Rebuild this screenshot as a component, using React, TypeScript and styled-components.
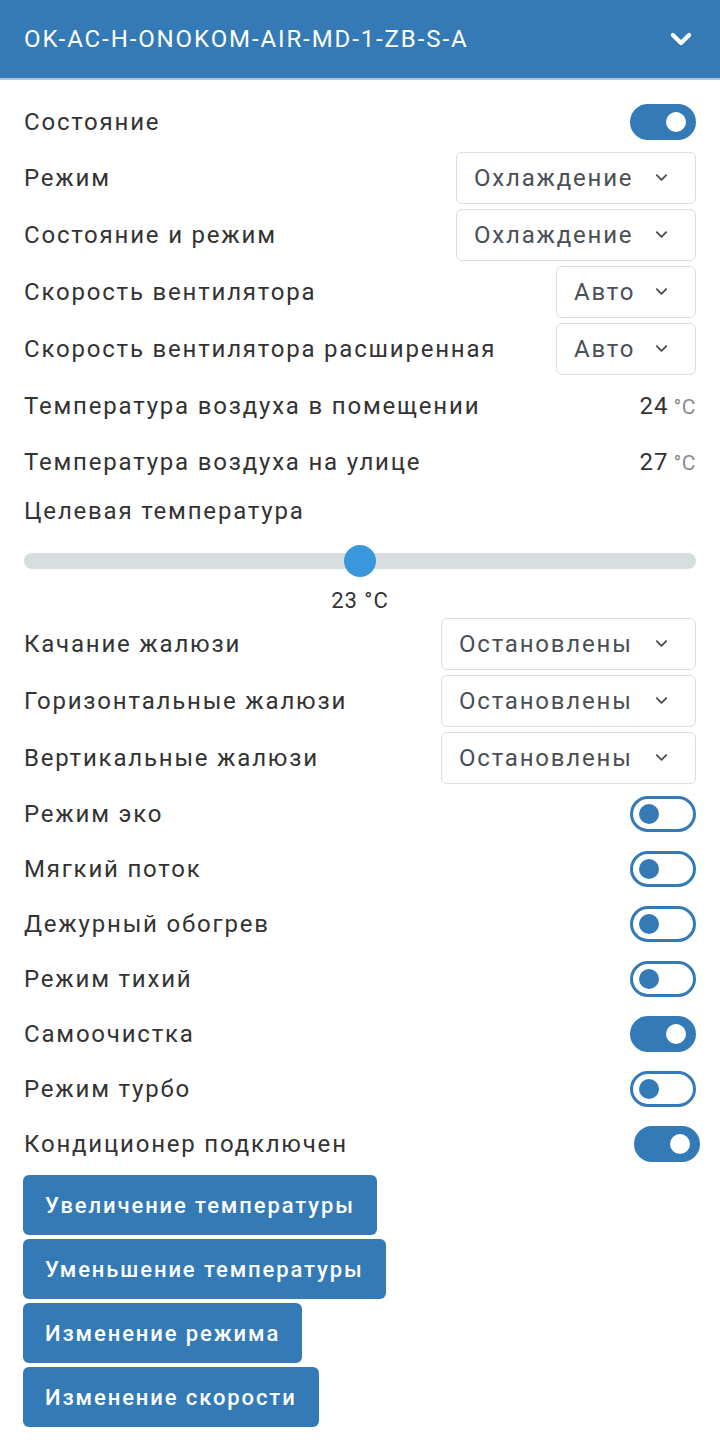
import styled, { createGlobalStyle } from 'styled-components';

const GlobalStyle = createGlobalStyle`
  body {
    margin: 0;
    background: #fff;
    font-family: Roboto, "Liberation Sans", sans-serif;
    color: #333;
    letter-spacing: 1.8px;
  }
`;

const BLUE = '#337ab7';

type Row =
  | { kind: 'toggle'; label: string; on: boolean; shift?: boolean }
  | { kind: 'select'; label: string; value: string; width: number }
  | { kind: 'value'; label: string; value: string; height: number };

const topRows: Row[] = [
  { kind: 'toggle', label: 'Состояние', on: true },
  { kind: 'select', label: 'Режим', value: 'Охлаждение', width: 240 },
  { kind: 'select', label: 'Состояние и режим', value: 'Охлаждение', width: 240 },
  { kind: 'select', label: 'Скорость вентилятора', value: 'Авто', width: 140 },
  { kind: 'select', label: 'Скорость вентилятора расширенная', value: 'Авто', width: 140 },
  { kind: 'value', label: 'Температура воздуха в помещении', value: '24', height: 57 },
  { kind: 'value', label: 'Температура воздуха на улице', value: '27', height: 55 },
];

const bottomRows: Row[] = [
  { kind: 'select', label: 'Качание жалюзи', value: 'Остановлены', width: 255 },
  { kind: 'select', label: 'Горизонтальные жалюзи', value: 'Остановлены', width: 255 },
  { kind: 'select', label: 'Вертикальные жалюзи', value: 'Остановлены', width: 255 },
  { kind: 'toggle', label: 'Режим эко', on: false },
  { kind: 'toggle', label: 'Мягкий поток', on: false },
  { kind: 'toggle', label: 'Дежурный обогрев', on: false },
  { kind: 'toggle', label: 'Режим тихий', on: false },
  { kind: 'toggle', label: 'Самоочистка', on: true },
  { kind: 'toggle', label: 'Режим турбо', on: false },
  { kind: 'toggle', label: 'Кондиционер подключен', on: true, shift: true },
];

const actions = [
  'Увеличение температуры',
  'Уменьшение температуры',
  'Изменение режима',
  'Изменение скорости',
];

const Chevron = ({ size, stroke, color }: { size: number; stroke: number; color: string }) => (
  <svg width={size} height={size} viewBox="0 0 16 16" fill="none">
    <path d="M3 5.5 L8 10.5 L13 5.5" stroke={color} strokeWidth={stroke} strokeLinecap="round" strokeLinejoin="round" />
  </svg>
);

const renderRow = (row: Row) => {
  if (row.kind === 'toggle') {
    return (
      <ItemRow key={row.label} $height={55}>
        <Label>{row.label}</Label>
        <Switch $on={row.on} $shift={row.shift}>
          <Knob $on={row.on} />
        </Switch>
      </ItemRow>
    );
  }
  if (row.kind === 'select') {
    return (
      <ItemRow key={row.label} $height={57}>
        <Label>{row.label}</Label>
        <Select $width={row.width}>
          <span>{row.value}</span>
          <Chevron size={15} stroke={2} color="#4a4f55" />
        </Select>
      </ItemRow>
    );
  }
  return (
    <ItemRow key={row.label} $height={row.height}>
      <Label>{row.label}</Label>
      <Reading>
        {row.value}
        <Unit>°C</Unit>
      </Reading>
    </ItemRow>
  );
};

export default function App() {
  return (
    <>
      <GlobalStyle />
      <Panel>
        <Header>
          <Title>OK-AC-H-ONOKOM-AIR-MD-1-ZB-S-A</Title>
          <Chevron size={26} stroke={2.6} color="#fff" />
        </Header>
        <Body>
          {topRows.map(renderRow)}
          <TargetBlock>
            <TargetLabel>Целевая температура</TargetLabel>
            <Slider>
              <Track />
              <Thumb style={{ left: `${(23 - 16) / (30 - 16) * 100}%` }} />
            </Slider>
            <SliderValue>23 °C</SliderValue>
          </TargetBlock>
          {bottomRows.map(renderRow)}
          <Actions>
            {actions.map((a) => (
              <ActionButton key={a}>{a}</ActionButton>
            ))}
          </Actions>
        </Body>
      </Panel>
    </>
  );
}

const Panel = styled.div`
  width: 720px;
`;

const Header = styled.div`
  height: 80px;
  background: ${BLUE};
  border-bottom: 2px solid #a9c8e6;
  display: flex;
  align-items: center;
  justify-content: space-between;
  padding: 0 26px 0 24px;
  box-sizing: border-box;
  color: #fff;
`;

const Title = styled.div`
  font-size: 24px;
  letter-spacing: 1.9px;
`;

const Body = styled.div`
  padding: 14px 24px 0 24px;
  display: flex;
  flex-direction: column;
`;

const ItemRow = styled.div<{ $height: number }>`
  height: ${(p) => p.$height}px;
  display: flex;
  align-items: center;
  justify-content: space-between;
`;

const Label = styled.div`
  font-size: 24px;
  color: #333;
  white-space: nowrap;
`;

const Switch = styled.div<{ $on: boolean; $shift?: boolean }>`
  width: 66px;
  height: 36px;
  box-sizing: border-box;
  border-radius: 18px;
  border: 3px solid ${BLUE};
  background: ${(p) => (p.$on ? BLUE : '#fff')};
  display: flex;
  align-items: center;
  justify-content: ${(p) => (p.$on ? 'flex-end' : 'flex-start')};
  padding: 0 6px 0 6px;
  margin-right: ${(p) => (p.$shift ? '-4px' : '0')};
`;

const Knob = styled.div<{ $on: boolean }>`
  width: 20px;
  height: 20px;
  border-radius: 50%;
  background: ${(p) => (p.$on ? '#fff' : BLUE)};
  margin: 0 ${(p) => (p.$on ? '1px' : '0')};
`;

const Select = styled.div<{ $width: number }>`
  width: ${(p) => p.$width}px;
  height: 52px;
  box-sizing: border-box;
  border: 1px solid #dadde1;
  border-radius: 6px;
  display: flex;
  align-items: center;
  justify-content: space-between;
  padding: 0 26px 0 17px;
  font-size: 24px;
  color: #4a4f55;
`;

const Reading = styled.div`
  font-size: 24px;
  color: #333;
  letter-spacing: 1px;
`;

const Unit = styled.span`
  font-size: 21px;
  color: #8a8d90;
  margin-left: 5px;
  letter-spacing: 0.5px;
`;

const TargetBlock = styled.div`
  display: flex;
  flex-direction: column;
`;

const TargetLabel = styled.div`
  font-size: 24px;
  height: 44px;
  display: flex;
  align-items: center;
`;

const Slider = styled.div`
  position: relative;
  height: 32px;
  margin-top: 12px;
  display: flex;
  align-items: center;
`;

const Track = styled.div`
  width: 100%;
  height: 16px;
  border-radius: 8px;
  background: #d8dde0;
`;

const Thumb = styled.div`
  position: absolute;
  top: 0;
  width: 32px;
  height: 32px;
  margin-left: -16px;
  border-radius: 50%;
  background: #3a97dc;
`;

const SliderValue = styled.div`
  font-size: 22px;
  text-align: center;
  height: 28px;
  line-height: 28px;
  margin-top: 10px;
  color: #333;
  letter-spacing: 1px;
`;

const Actions = styled.div`
  display: flex;
  flex-direction: column;
  align-items: flex-start;
  gap: 4px;
  margin: 4px 0 0 -1px;
`;

const ActionButton = styled.button`
  height: 60px;
  border: none;
  border-radius: 6px;
  background: ${BLUE};
  color: #fff;
  font-family: Roboto, "Liberation Sans", sans-serif;
  font-size: 22px;
  font-weight: 500;
  letter-spacing: 1.9px;
  padding: 0 22px;
`;
